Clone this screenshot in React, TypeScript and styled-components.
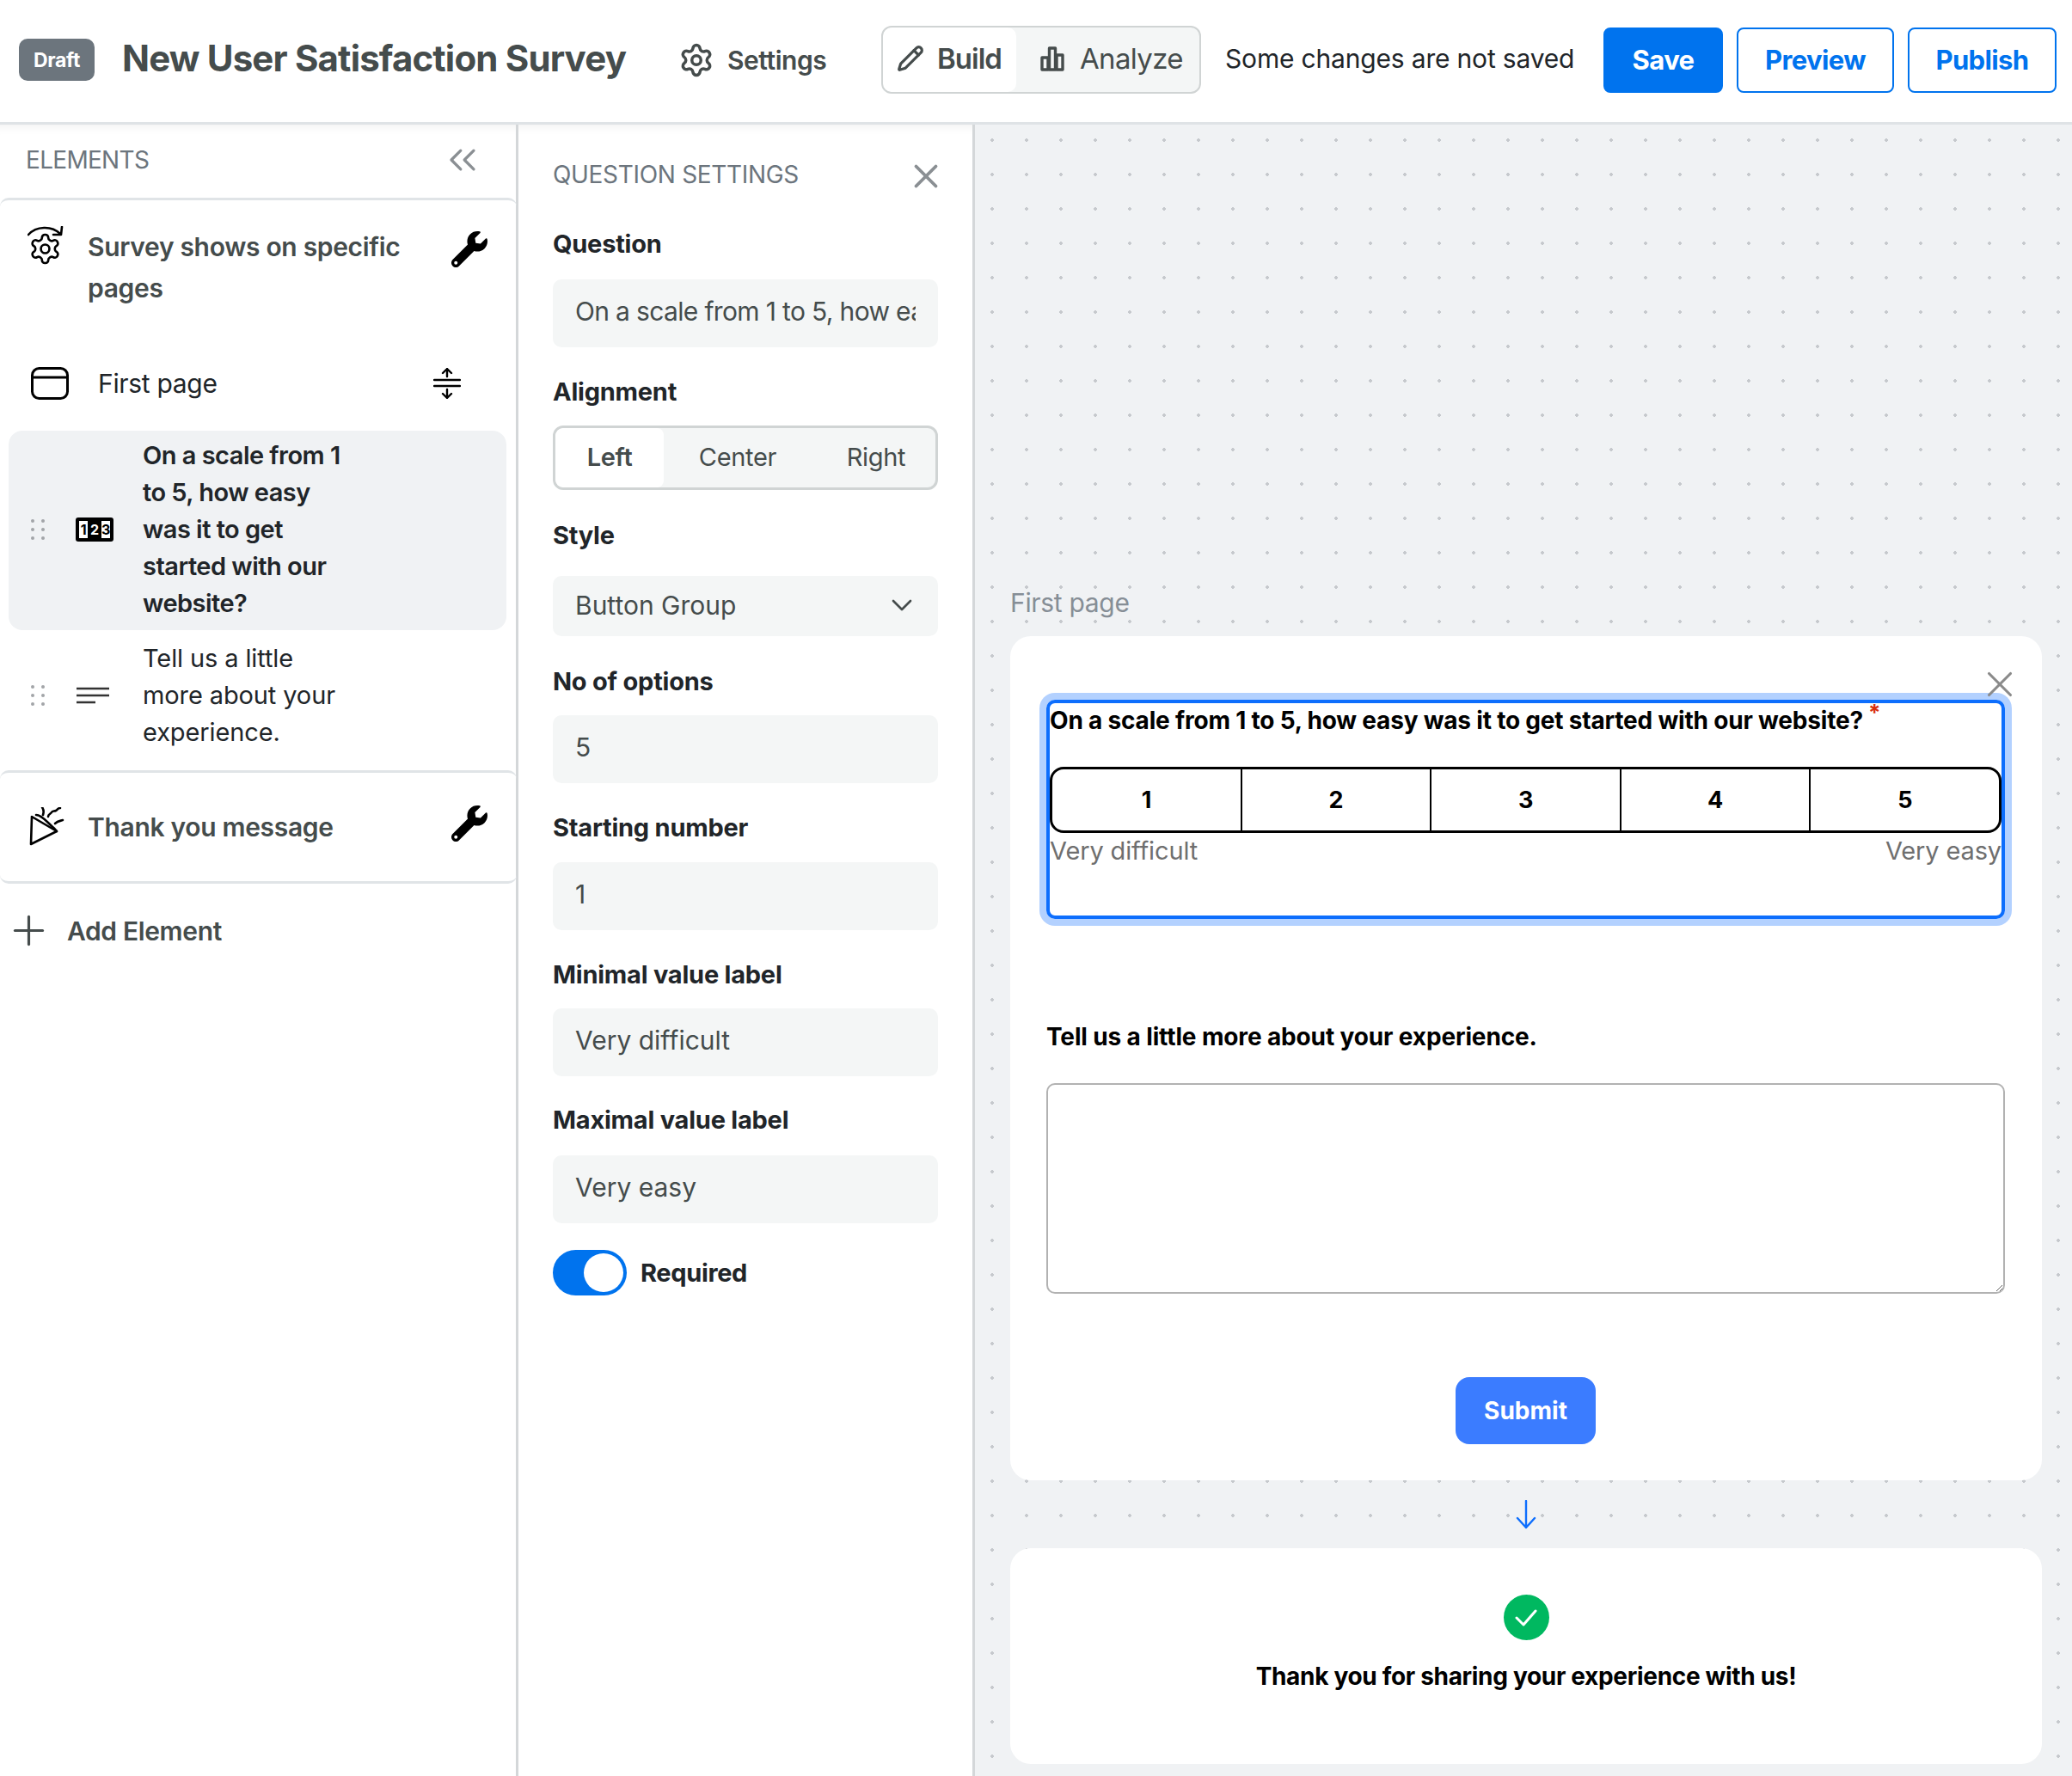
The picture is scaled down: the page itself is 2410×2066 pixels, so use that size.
import React from 'react';
import styled, { createGlobalStyle } from 'styled-components';
import { ChevronDown, ChevronsLeft, Pencil, Plus, Settings, X } from 'lucide-react';
import { FaWrench } from 'react-icons/fa';

const GlobalStyle = createGlobalStyle`
    html, body {
        margin: 0;
        padding: 0;
        background: #fff;
    }
    body {
        font-family: Inter, "Noto Sans", "Liberation Sans", sans-serif;
        letter-spacing: -0.02em;
        color: #212529;
    }
    * {
        box-sizing: border-box;
    }
`;

const Page = styled.div`
    width: 2410px;
    height: 2066px;
    display: flex;
    flex-direction: column;
    overflow: hidden;
`;

// Top bar
const Header = styled.header`
    height: 145px;
    flex: none;
    display: flex;
    align-items: center;
    padding: 0 18px 3px 22px;
    border-bottom: 3px solid #dfe3e6;
`;

const DraftBadge = styled.span`
    width: 88px;
    height: 49px;
    display: flex;
    align-items: center;
    justify-content: center;
    border-radius: 10px;
    background: #6c757d;
    color: #fff;
    font-size: 23px;
    font-weight: 700;
`;

const Title = styled.h1`
    margin: 0 0 0 32px;
    padding-bottom: 4px;
    width: 621px;
    font-size: 42px;
    font-weight: 700;
    color: #454c4c;
    letter-spacing: -0.02em;
    white-space: nowrap;
`;

const SettingsLink = styled.a`
    display: flex;
    align-items: center;
    gap: 15px;
    width: 236px;
    margin-left: 26px;
    color: #454c4c;
    font-size: 30px;
    font-weight: 600;
    letter-spacing: -0.015em;
`;

const ModeSwitch = styled.div`
    width: 372px;
    height: 79px;
    display: flex;
    border: 2px solid #d0d4d4;
    border-radius: 12px;
    background: #f4f6f6;
    overflow: hidden;
`;

const ModeTab = styled.div<{ $active?: boolean }>`
    display: flex;
    align-items: center;
    gap: ${p => (p.$active ? '15px' : '18px')};
    height: 100%;
    padding: 0 0 3px ${p => (p.$active ? '16px' : '28px')};
    width: ${p => (p.$active ? '155px' : 'auto')};
    border-radius: 10px;
    background: ${p => (p.$active ? '#fff' : 'transparent')};
    color: #454c4c;
    font-size: 33px;
    font-weight: ${p => (p.$active ? 600 : 400)};
    letter-spacing: ${p => (p.$active ? '-0.03em' : '-0.02em')};
`;

const SaveStatus = styled.span`
    margin-left: 28px;
    padding-bottom: 3px;
    width: 440px;
    font-size: 30px;
    letter-spacing: -0.006em;
    color: #212529;
    white-space: nowrap;
`;

const HeaderButton = styled.button<{ $primary?: boolean; $width: number }>`
    width: ${p => p.$width}px;
    height: 76px;
    margin-right: 16px;
    border: 2px solid #0073ee;
    border-radius: 8px;
    background: ${p => (p.$primary ? '#0073ee' : '#fff')};
    color: ${p => (p.$primary ? '#fff' : '#0073ee')};
    font: inherit;
    font-size: 31px;
    font-weight: 700;
    letter-spacing: -0.02em;

    &:last-child {
        margin-right: 0;
    }
`;

const Body = styled.div`
    flex: 1;
    min-height: 0;
    display: flex;
`;

// Elements panel
const ElementsPanel = styled.aside`
    width: 603px;
    flex: none;
    border-right: 3px solid #d4d7d9;
    box-shadow: inset 0 14px 14px -14px rgba(0, 0, 0, 0.08);
`;

const PanelHeading = styled.div`
    height: 85px;
    display: flex;
    align-items: center;
    justify-content: space-between;
    padding: 0 36px 4px 30px;
    color: #6c757d;
    font-size: 28px;
    font-weight: 400;
    letter-spacing: -0.025em;
`;

const PanelCard = styled.section<{ $closed?: boolean }>`
    display: flex;
    align-items: ${p => (p.$closed ? 'center' : 'flex-start')};
    padding: ${p => (p.$closed ? '0 34px 0 32px' : '30px 34px 0 32px')};
    height: ${p => (p.$closed ? '132px' : 'auto')};
    border-top: 3px solid #e0e4e7;
    border-bottom: ${p => (p.$closed ? '3px solid #e0e4e7' : 'none')};
    border-radius: 10px;
    margin-right: -1px;

    & > svg:last-child {
        margin-top: ${p => (p.$closed ? '-9px' : '6px')};
    }
`;

const CardIcon = styled.div`
    width: 70px;
    flex: none;
    display: flex;
`;

const CardText = styled.div`
    flex: 1;
    color: #454c4c;
    font-size: 30px;
    font-weight: 600;
    line-height: 48px;
`;

const PageRow = styled.div`
    height: 74px;
    margin-top: 50px;
    display: flex;
    align-items: center;
    padding: 0 64px 0 36px;
    font-size: 30px;
    color: #212529;
`;

const PageName = styled.span`
    flex: 1;
    margin-left: 34px;
`;

const QuestionRow = styled.div<{ $selected?: boolean }>`
    margin: ${p => (p.$selected ? '18px 11px 0 10px' : '0 11px 0 10px')};
    padding: ${p => (p.$selected ? '7px 0 10px 26px' : '11px 0 23px 26px')};
    display: flex;
    align-items: center;
    border-radius: 16px;
    background: ${p => (p.$selected ? '#f0f2f4' : 'transparent')};
`;

const DragDots = styled.div`
    width: 16px;
    height: 24px;
    flex: none;
    display: grid;
    grid-template-columns: 4px 4px;
    justify-content: space-between;
    align-content: space-between;

    i {
        width: 4px;
        height: 4px;
        border-radius: 50%;
        background: #a2a5a8;
    }
`;

const QuestionIcon = styled.div`
    width: 44px;
    flex: none;
    margin: 0 34px 0 36px;
    display: flex;
`;

const QuestionName = styled.div<{ $selected?: boolean }>`
    width: 243px;
    font-size: 29px;
    line-height: 43px;
    font-weight: ${p => (p.$selected ? 600 : 400)};
    letter-spacing: ${p => (p.$selected ? '-0.018em' : '-0.004em')};
    color: #212529;
`;

const AddElement = styled.div`
    margin-top: 27px;
    display: flex;
    align-items: center;
    gap: 17px;
    padding-left: 6px;
    color: #454c4c;
    font-size: 30px;
    font-weight: 600;
    line-height: 44px;
    letter-spacing: -0.012em;
`;

// Question settings panel
const SettingsPanel = styled.aside`
    width: 531px;
    flex: none;
    padding: 0 40px;
    border-right: 3px solid #d4d7d9;
    box-shadow: inset 0 14px 14px -14px rgba(0, 0, 0, 0.08);
`;

const SettingsHeading = styled.div`
    display: flex;
    align-items: center;
    justify-content: space-between;
    height: 32px;
    margin: 42px 0 0;
    color: #6c757d;
    font-size: 28px;

    svg {
        margin-right: -9px;
        margin-top: 3px;
    }
`;

const Label = styled.div<{ $top: number; $bottom: number }>`
    margin: ${p => p.$top}px 0 ${p => p.$bottom}px;
    line-height: 34px;
    font-size: 29px;
    font-weight: 700;
    letter-spacing: -0.008em;
    color: #212529;
`;

const TextInput = styled.input<{ $tight?: boolean }>`
    display: block;
    width: 100%;
    height: 79px;
    padding: 0 26px 5px;
    border: none;
    border-radius: 10px;
    background: #f4f6f6;
    color: #454c4c;
    font: inherit;
    font-size: 30px;
    letter-spacing: ${p => (p.$tight ? '-0.022em' : '0')};
`;

const AlignGroup = styled.div`
    height: 75px;
    display: flex;
    border: 3px solid #d0d4d4;
    border-radius: 12px;
    background: #f4f6f6;
    overflow: hidden;
`;

const AlignOption = styled.div<{ $active?: boolean; $width: number }>`
    width: ${p => p.$width}px;
    flex: none;
    display: flex;
    align-items: center;
    justify-content: center;
    padding-bottom: 2px;
    border-radius: 8px;
    background: ${p => (p.$active ? '#fff' : 'transparent')};
    color: #454c4c;
    font-size: 29px;
    font-weight: ${p => (p.$active ? 600 : 400)};
`;

const SelectBox = styled.div`
    height: 70px;
    display: flex;
    align-items: center;
    justify-content: space-between;
    padding: 0 22px 2px 26px;
    border-radius: 10px;
    background: #f4f6f6;
    color: #454c4c;
    font-size: 30px;
    letter-spacing: 0;
`;

const RequiredRow = styled.div`
    margin-top: 31px;
    display: flex;
    align-items: center;
    gap: 16px;
    font-size: 29px;
    font-weight: 700;
    letter-spacing: -0.012em;
`;

const Toggle = styled.div`
    width: 86px;
    height: 53px;
    display: flex;
    justify-content: flex-end;
    align-items: center;
    padding-right: 4px;
    border-radius: 27px;
    background: #0073ee;

    &::after {
        content: '';
        width: 46px;
        height: 45px;
        border-radius: 50%;
        background: #fff;
    }
`;

// Canvas with the survey preview
const Canvas = styled.main`
    flex: 1;
    min-width: 0;
    padding: 534px 35px 0 41px;
    background-color: #f0f2f4;
    background-image: radial-gradient(circle at center, #c6c9cd 1.6px, transparent 2px);
    background-size: 40px 40px;
    background-position: 0 -2px;
`;

const CanvasLabel = styled.div`
    height: 44px;
    line-height: 44px;
    margin-bottom: 17px;
    color: #868e96;
    font-size: 30px;
`;

const SurveyCard = styled.div<{ $height: number; $center?: boolean }>`
    position: relative;
    height: ${p => p.$height}px;
    display: flex;
    flex-direction: column;
    align-items: ${p => (p.$center ? 'center' : 'stretch')};
    padding: ${p => (p.$center ? '54px 0 0' : '74px 43px 0 42px')};
    border-radius: 24px;
    background: #fff;
`;

const CloseQuestion = styled.span`
    position: absolute;
    top: 31px;
    right: 24px;
    line-height: 0;
    z-index: 1;
`;

const QuestionFrame = styled.div`
    height: 255px;
    border: 4px solid #0d6efd;
    border-radius: 10px;
    box-shadow: 0 0 0 8px #b3d1ff;
`;

const FrameTitle = styled.div`
    height: 40px;
    line-height: 40px;
    color: #000;
    font-size: 28px;
    font-weight: 700;
    letter-spacing: -0.007em;
    white-space: nowrap;

    sup {
        color: #d92d0e;
        font-size: 26px;
        font-weight: 700;
        line-height: 0;
        margin-left: 6px;
    }
`;

const ScaleRow = styled.div`
    margin-top: 34px;
    height: 77px;
    display: flex;
    border: 3px solid #000;
    border-radius: 16px;
    overflow: hidden;
`;

const ScaleCell = styled.div`
    flex: 1;
    display: flex;
    align-items: center;
    justify-content: center;
    border-left: 2px solid #000;
    color: #000;
    font-size: 27px;
    font-weight: 700;

    &:first-child {
        border-left: none;
    }
`;

const ScaleLabels = styled.div`
    display: flex;
    justify-content: space-between;
    margin-top: 1px;
    line-height: 40px;
    color: #6f6f6f;
    font-size: 29px;
    letter-spacing: -0.005em;
`;

const OpenQuestion = styled.div`
    margin-top: 117px;
    line-height: 40px;
    color: #000;
    font-size: 28px;
    font-weight: 700;
    letter-spacing: -0.005em;
`;

const AnswerBox = styled.textarea`
    display: block;
    width: 100%;
    height: 245px;
    margin-top: 34px;
    border: 2px solid #b2b2b2;
    border-radius: 10px;
    background: #fff;
`;

const SubmitButton = styled.button`
    display: block;
    width: 163px;
    height: 78px;
    margin: 97px auto 0;
    border: none;
    border-radius: 16px;
    background: #3b7cff;
    color: #fff;
    font: inherit;
    font-size: 28px;
    font-weight: 700;
`;

const FlowArrow = styled.div`
    height: 79px;
    display: flex;
    align-items: center;
    justify-content: center;
`;

const CheckBadge = styled.div`
    width: 53px;
    height: 53px;
    display: flex;
    align-items: center;
    justify-content: center;
    border-radius: 50%;
    background: #00b860;
`;

const ThankYou = styled.div`
    margin-top: 22px;
    line-height: 40px;
    color: #000;
    font-size: 28px;
    font-weight: 700;
`;

// Drawn icons
const SurveyGearIcon = () => (
    <svg width="42" height="46" viewBox="0 0 42 46" fill="none" stroke="#000" strokeWidth="2.6" strokeLinecap="round" strokeLinejoin="round">
        <path d="M1 10C10 0 28-1 38 9" />
        <path d="M40 1l-1 9H30" />
        <g transform="translate(0.7 6.7) scale(1.65)">
            <path d="M12.22 2h-.44a2 2 0 0 0-2 2v.18a2 2 0 0 1-1 1.73l-.43.25a2 2 0 0 1-2 0l-.15-.08a2 2 0 0 0-2.73.73l-.22.38a2 2 0 0 0 .73 2.73l.15.1a2 2 0 0 1 1 1.72v.51a2 2 0 0 1-1 1.74l-.15.09a2 2 0 0 0-.73 2.73l.22.38a2 2 0 0 0 2.73.73l.15-.08a2 2 0 0 1 2 0l.43.25a2 2 0 0 1 1 1.73V20a2 2 0 0 0 2 2h.44a2 2 0 0 0 2-2v-.18a2 2 0 0 1 1-1.73l.43-.25a2 2 0 0 1 2 0l.15.08a2 2 0 0 0 2.73-.73l.22-.39a2 2 0 0 0-.73-2.73l-.15-.08a2 2 0 0 1-1-1.74v-.5a2 2 0 0 1 1-1.74l.15-.09a2 2 0 0 0 .73-2.73l-.22-.38a2 2 0 0 0-2.73-.73l-.15.08a2 2 0 0 1-2 0l-.43-.25a2 2 0 0 1-1-1.73V4a2 2 0 0 0-2-2z" strokeWidth="1.6" />
            <circle cx="12" cy="12" r="3" strokeWidth="1.6" />
        </g>
    </svg>
);

const PartyIcon = () => (
    <svg width="44" height="46" viewBox="-4 0 44 46" fill="none" stroke="#000" strokeWidth="2.6" strokeLinecap="round" strokeLinejoin="round">
        <path d="M1 11 0 43l30-15z" />
        <path d="M6 9c4 0 9 4 14 9s9 8 10 10" />
        <path d="M13 0c2 3 2 6 1 9" />
        <path d="M20 11c0-3 3-3 4-5s3-1 5-2 2-3 5-3" />
        <path d="M28 19c3-3 6-3 9-4" />
    </svg>
);

const PageIcon = () => (
    <svg width="44" height="38" viewBox="0 0 44 38" fill="none" stroke="#000" strokeWidth="3">
        <rect x="1.5" y="1.5" width="41" height="35" rx="8" />
        <path d="M2 12h40" />
    </svg>
);

const ExpandIcon = () => (
    <svg width="32" height="36" viewBox="0 0 32 36" fill="none" stroke="#000" strokeWidth="2.4" strokeLinecap="round" strokeLinejoin="round">
        <path d="M1 14h30M1 21h30" />
        <path d="M16 10V1M11 6l5-5 5 5" />
        <path d="M16 25v10M11 30l5 5 5-5" />
    </svg>
);

const ScaleIcon = () => (
    <svg width="44" height="28" viewBox="0 0 44 28">
        <rect width="44" height="28" rx="3" fill="#000" />
        {['1', '2', '3'].map((n, i) => (
            <g key={n}>
                <rect x={4 + i * 13} y="4" width="10" height="20" fill={i === 1 ? '#000' : '#fff'} />
                <text x={9 + i * 13} y="20" textAnchor="middle" fontSize="16" fontWeight="700" fontFamily="Inter, sans-serif" fill={i === 1 ? '#fff' : '#000'}>
                    {n}
                </text>
            </g>
        ))}
    </svg>
);

const TextLinesIcon = () => (
    <svg width="40" height="20" viewBox="0 0 40 20" stroke="#333" strokeWidth="2.6">
        <path d="M1 2h38M1 10h38M1 18h22" />
    </svg>
);

const BarsIcon = () => (
    <svg width="28" height="30" viewBox="0 0 28 30" fill="none" stroke="#454c4c" strokeWidth="3.4" strokeLinejoin="round">
        <rect x="2" y="14" width="7" height="14" />
        <rect x="10.5" y="3" width="7" height="25" />
        <rect x="19" y="11" width="7" height="17" />
    </svg>
);

const ThinArrow = () => (
    <svg width="24" height="34" viewBox="0 0 24 34" fill="none" stroke="#0d6efd" strokeWidth="2.4" strokeLinecap="round" strokeLinejoin="round">
        <path d="M12 1v31M2 21l10 11 10-11" />
    </svg>
);

const CheckIcon = () => (
    <svg width="26" height="20" viewBox="0 0 26 20" fill="none" stroke="#fff" strokeWidth="3" strokeLinecap="round" strokeLinejoin="round">
        <path d="M2 10l8 8L24 2" />
    </svg>
);

const settingsFields = [
    { label: 'No of options', value: '5', top: 36, bottom: 22 },
    { label: 'Starting number', value: '1', top: 35, bottom: 23 },
    { label: 'Minimal value label', value: 'Very difficult', top: 35, bottom: 22 },
    { label: 'Maximal value label', value: 'Very easy', top: 34, bottom: 24 },
];

const App: React.FC = () => {
    return (
        <Page>
            <GlobalStyle />
            <Header>
                <DraftBadge>Draft</DraftBadge>
                <Title>New User Satisfaction Survey</Title>
                <SettingsLink>
                    <Settings size={42} strokeWidth={2} />
                    Settings
                </SettingsLink>
                <ModeSwitch>
                    <ModeTab $active>
                        <Pencil size={32} strokeWidth={2.4} />
                        Build
                    </ModeTab>
                    <ModeTab>
                        <BarsIcon />
                        Analyze
                    </ModeTab>
                </ModeSwitch>
                <SaveStatus>Some changes are not saved</SaveStatus>
                <HeaderButton $primary $width={139}>Save</HeaderButton>
                <HeaderButton $width={183}>Preview</HeaderButton>
                <HeaderButton $width={173}>Publish</HeaderButton>
            </Header>

            <Body>
                <ElementsPanel>
                    <PanelHeading>
                        ELEMENTS
                        <ChevronsLeft size={52} strokeWidth={1.5} color="#8a8f93" />
                    </PanelHeading>
                    <PanelCard>
                        <CardIcon><SurveyGearIcon /></CardIcon>
                        <CardText>Survey shows on specific pages</CardText>
                        <FaWrench size={42} color="#000" />
                    </PanelCard>
                    <PageRow>
                        <PageIcon />
                        <PageName>First page</PageName>
                        <ExpandIcon />
                    </PageRow>
                    <QuestionRow $selected>
                        <DragDots><i /><i /><i /><i /><i /><i /></DragDots>
                        <QuestionIcon><ScaleIcon /></QuestionIcon>
                        <QuestionName $selected>On a scale from 1 to 5, how easy was it to get started with our website?</QuestionName>
                    </QuestionRow>
                    <QuestionRow>
                        <DragDots><i /><i /><i /><i /><i /><i /></DragDots>
                        <QuestionIcon><TextLinesIcon /></QuestionIcon>
                        <QuestionName>Tell us a little more about your experience.</QuestionName>
                    </QuestionRow>
                    <PanelCard $closed>
                        <CardIcon><PartyIcon /></CardIcon>
                        <CardText>Thank you message</CardText>
                        <FaWrench size={42} color="#000" />
                    </PanelCard>
                    <AddElement>
                        <Plus size={55} strokeWidth={1.4} />
                        Add Element
                    </AddElement>
                </ElementsPanel>

                <SettingsPanel>
                    <SettingsHeading>
                        QUESTION SETTINGS
                        <X size={46} strokeWidth={2} color="#8a8f93" />
                    </SettingsHeading>
                    <Label $top={48} $bottom={24}>Question</Label>
                    <TextInput $tight readOnly value="On a scale from 1 to 5, how easy was it to get started with our website?" />
                    <Label $top={35} $bottom={22}>Alignment</Label>
                    <AlignGroup>
                        <AlignOption $active $width={126}>Left</AlignOption>
                        <AlignOption $width={172}>Center</AlignOption>
                        <AlignOption $width={150}>Right</AlignOption>
                    </AlignGroup>
                    <Label $top={36} $bottom={30}>Style</Label>
                    <SelectBox>
                        Button Group
                        <ChevronDown size={40} strokeWidth={1.6} />
                    </SelectBox>
                    {settingsFields.map(field => (
                        <React.Fragment key={field.label}>
                            <Label $top={field.top} $bottom={field.bottom}>{field.label}</Label>
                            <TextInput readOnly value={field.value} />
                        </React.Fragment>
                    ))}
                    <RequiredRow>
                        <Toggle />
                        Required
                    </RequiredRow>
                </SettingsPanel>

                <Canvas>
                    <CanvasLabel>First page</CanvasLabel>
                    <SurveyCard $height={982}>
                        <CloseQuestion><X size={50} strokeWidth={1.5} color="#8a8a8a" /></CloseQuestion>
                        <QuestionFrame>
                            <FrameTitle>
                                On a scale from 1 to 5, how easy was it to get started with our website?<sup>*</sup>
                            </FrameTitle>
                            <ScaleRow>
                                {[1, 2, 3, 4, 5].map(n => <ScaleCell key={n}>{n}</ScaleCell>)}
                            </ScaleRow>
                            <ScaleLabels>
                                <span>Very difficult</span>
                                <span>Very easy</span>
                            </ScaleLabels>
                        </QuestionFrame>
                        <OpenQuestion>Tell us a little more about your experience.</OpenQuestion>
                        <AnswerBox />
                        <SubmitButton>Submit</SubmitButton>
                    </SurveyCard>
                    <FlowArrow><ThinArrow /></FlowArrow>
                    <SurveyCard $height={251} $center>
                        <CheckBadge><CheckIcon /></CheckBadge>
                        <ThankYou>Thank you for sharing your experience with us!</ThankYou>
                    </SurveyCard>
                </Canvas>
            </Body>
        </Page>
    );
};

export default App;
